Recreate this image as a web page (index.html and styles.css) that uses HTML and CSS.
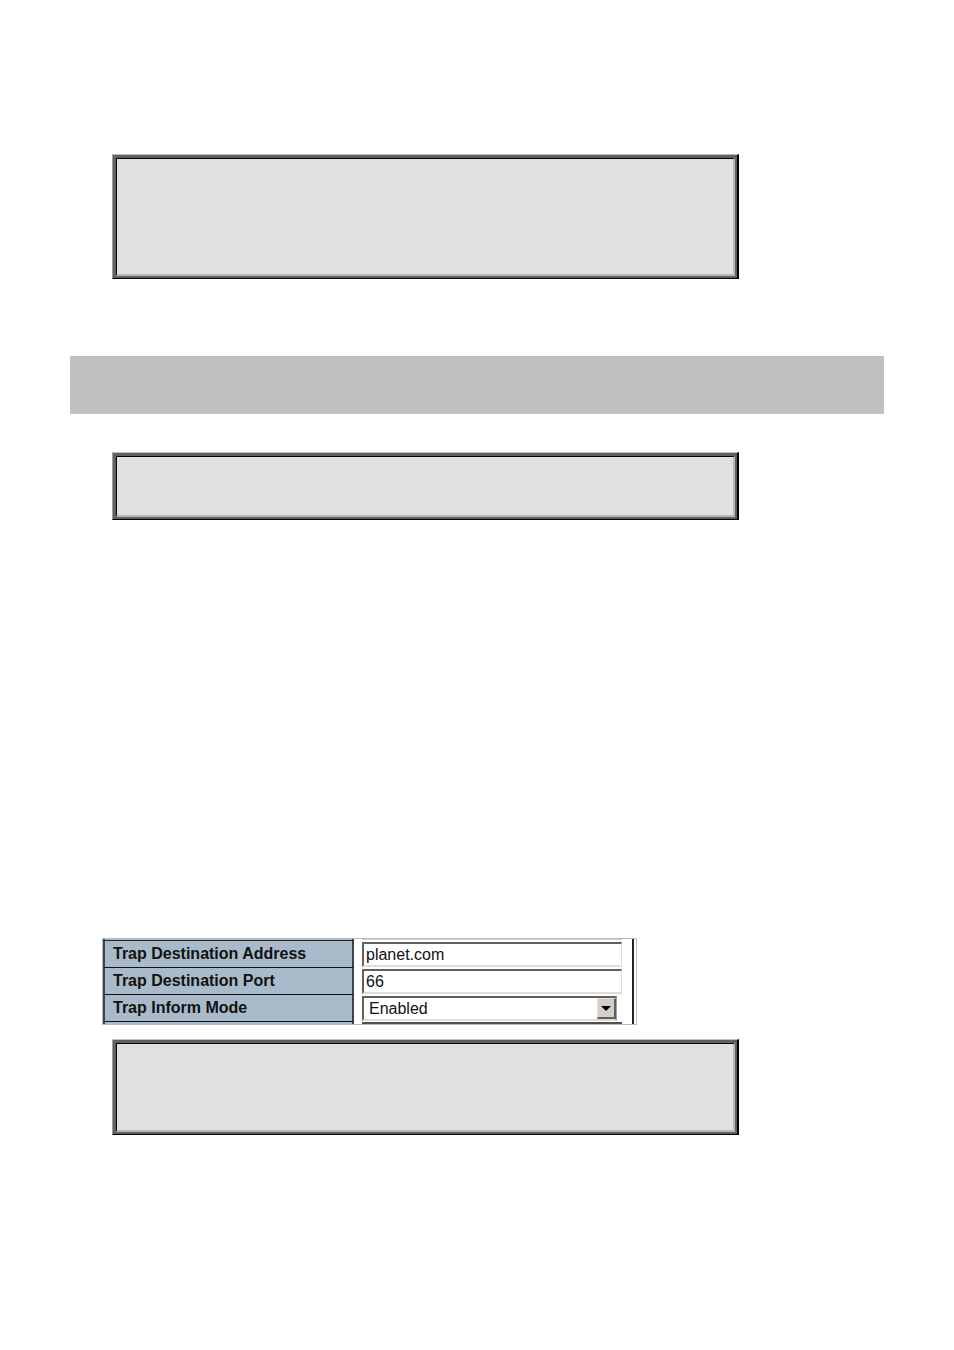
FILE: index.html
```
<!DOCTYPE html>
<html lang="en">
<head>
  <meta charset="UTF-8">
  <meta name="viewport" content="width=device-width, initial-scale=1.0">
  <title>Trap Configuration</title>
  <link rel="stylesheet" href="styles.css">
</head>
<body>

<main class="page">
  <div class="note note-large"><div class="note-inner"></div></div>

  <div class="banner"></div>

  <div class="note note-small"><div class="note-inner"></div></div>

  <form class="trap-form">
    <div class="edge-label edge-top"></div>
    <div class="edge-field edge-top"></div>

    <label for="trap-address">Trap Destination Address</label>
    <div class="field"><input type="text" id="trap-address" value="planet.com"></div>

    <label for="trap-port">Trap Destination Port</label>
    <div class="field"><input type="text" id="trap-port" value="66"></div>

    <label for="trap-inform">Trap Inform Mode</label>
    <div class="field">
      <div class="select">
        <select id="trap-inform">
          <option>Enabled</option>
          <option>Disabled</option>
        </select>
        <span class="arrow">
          <svg width="10" height="5" viewBox="0 0 10 5"><path d="M0 0H10L5 5Z" fill="#000"/></svg>
        </span>
      </div>
    </div>

    <div class="edge-label"></div>
    <div class="edge-field edge-bottom"></div>
  </form>

  <div class="note note-medium"><div class="note-inner"></div></div>
</main>

</body>
</html>
```

FILE: styles.css
```
body {
  margin: 0;
  background-color: white;
  font-family: "Liberation Sans", Arial, sans-serif;
}
.page {
  padding: 154px 70px 80px;
}

/* double bevelled boxes */
.note {
  display: flex;
  box-sizing: border-box;
  max-width: 627px;
  margin-left: 42px;
  padding: 3px 2px 2px 3px;
  background-color: #606060;
  border-style: solid;
  border-width: 1px 2px 1px 1px;
  border-color: #c0c0c0 black black #a0a0a0;
}
.note-inner {
  flex: 1;
  background-color: #e0e0e0;
  border-style: solid;
  border-width: 1px 2px 2px 1px;
  border-color: black #b8b8b8 #b8b8b8 black;
}
.note-large {
  min-height: 125px;
}
.note-small {
  min-height: 68px;
}
.note-medium {
  min-height: 96px;
}
.banner {
  height: 58px;
  margin: 77px 0 38px;
  background-color: #c0c0c0;
}

/* trap settings */
.trap-form {
  display: grid;
  grid-template-columns: 251px 1fr;
  grid-template-rows: 2px 27px 27px 27px 2px;
  box-sizing: border-box;
  max-width: 535px;
  margin: 418px 0 14px 32px;
  border: 1px solid #bbb;
  font-size: 16px;
}
.trap-form label, .edge-label {
  box-sizing: border-box;
  background-color: #a9bbca;
  border-left: 2px solid #384450;
  border-right: 2px solid #384450;
}
.trap-form label {
  padding-left: 8px;
  line-height: 26px;
  font-weight: bold;
  color: #111;
  border-bottom: 1px solid #111;
}
.edge-label.edge-top {
  border-bottom: 1px solid #222;
}
.field, .edge-field {
  margin-right: 2px;
  padding: 0 10px 0 8px;
  border-right: 2px solid #222;
}
.field {
  display: flex;
  align-items: center;
}
.edge-field::before {
  content: "";
  display: block;
  height: 1px;
  background-color: #d4d0c8;
}
.edge-field.edge-bottom::before {
  height: 2px;
  background-color: #505050;
}
.field input, .field select {
  box-sizing: border-box;
  width: 100%;
  height: 25px;
  margin: 0;
  padding: 0 2px;
  background-color: white;
  border: 2px solid;
  border-color: #606060 #e0dcd8 #e0dcd8 #606060;
  border-radius: 0;
  outline: none;
  color: #111;
  font-family: inherit;
  font-size: 16px;
}
.field input {
  border-right-width: 1px;
}
.field select {
  appearance: none;
  padding: 0 20px 0 5px;
  border-right-color: #a0a0a0;
}
.select {
  position: relative;
  flex: 1;
  display: flex;
  margin-right: 5px;
}
.arrow {
  position: absolute;
  top: 2px;
  right: 1px;
  bottom: 2px;
  display: flex;
  align-items: center;
  justify-content: center;
  box-sizing: border-box;
  width: 19px;
  background-color: #d4d0c8;
  border: 1px solid;
  border-width: 1px 2px 2px 1px;
  border-color: #e8e4e0 #606060 #606060 #e8e4e0;
  pointer-events: none;
}
```
